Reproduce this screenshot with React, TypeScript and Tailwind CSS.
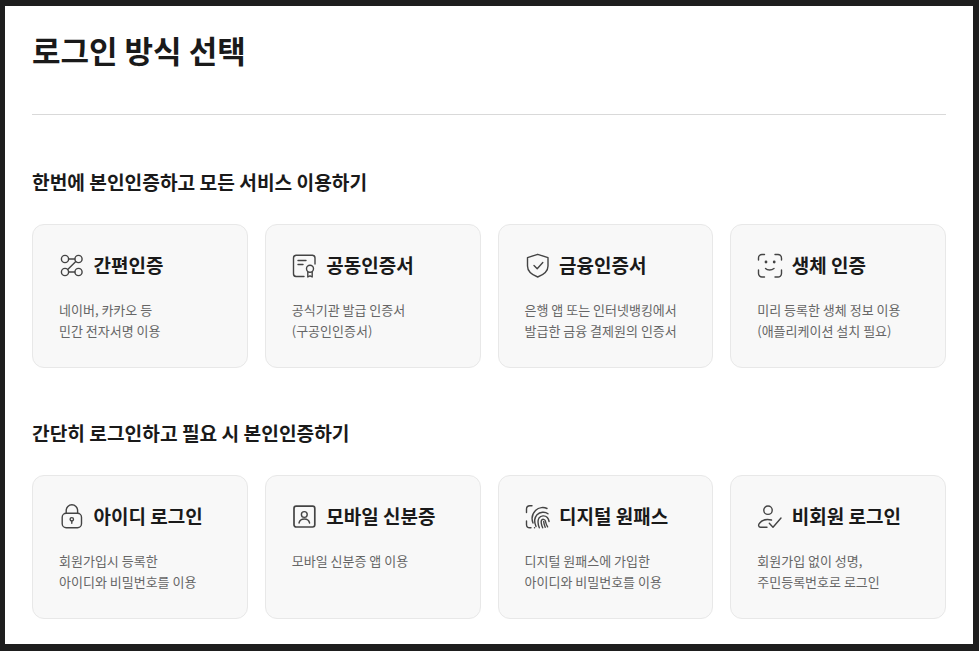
import React from "react";

const S = { fill: "none", stroke: "#444", strokeWidth: 1.4, strokeLinecap: "round" as const, strokeLinejoin: "round" as const };

const Svg = ({ children }: { children: React.ReactNode }) => (
  <svg width="26" height="26" viewBox="0 0 26 26" className="shrink-0" {...S}>{children}</svg>
);

const icons: Record<string, React.ReactNode> = {
  simple: (
    <Svg>
      <circle cx="6" cy="7" r="3.6" /><circle cx="19.5" cy="7" r="3.6" />
      <circle cx="6" cy="20" r="3.6" /><circle cx="19.5" cy="20" r="3.6" />
      <path d="M9.6 7h6.300M9.600 20h6.300M16.800 9.500l-8.100 8" />
    </Svg>
  ),
  cert: (
    <Svg>
      <path d="M12 24.500H4A2.800 2.800 0 0 1 1.500 21.500V6A2.800 2.800 0 0 1 4 3.200h16.500A2.800 2.800 0 0 1 23 6V12" />
      <path d="M6 8.500h8M6 12.500h5" />
      <circle cx="18" cy="16.800" r="3.500" />
      <path d="M15.800 20v5l2.200-1.200 2.200 1.200v-5" />
    </Svg>
  ),
  shield: (
    <Svg>
      <path d="M12.700 2.300l10.300 3.400v8.300c0 5-4.500 8.800-10.300 11-5.800-2.200-10.200-6-10.200-11V5.700z" />
      <path d="M9 13.500l3.200 3.200 5.600-6.200" />
    </Svg>
  ),
  face: (
    <Svg>
      <path d="M1.500 8V6A3.500 3.500 0 0 1 5 2.500h2.500M18 2.500h2.500A3.500 3.500 0 0 1 24.500 6v2M1.500 18v3.500A3.500 3.500 0 0 0 5 25h2.500M18 25h2.500a3.500 3.500 0 0 0 4-3.500V18" />
      <path d="M8.500 16.500c2 2 6 2 8.500 0" />
      <circle cx="9" cy="10" r=".7" fill="#444" /><circle cx="17.200" cy="10" r=".7" fill="#444" />
    </Svg>
  ),
  lock: (
    <Svg>
      <rect x="3.200" y="10.300" width="19.300" height="14.500" rx="4" />
      <path d="M7.200 10.300V7.500a5.700 5.700 0 0 1 11.400 0v2.800" />
      <circle cx="12.800" cy="16.300" r="1.700" />
      <path d="M12.800 18v2.300" />
    </Svg>
  ),
  mobile: (
    <Svg>
      <rect x="2" y="3.200" width="20.800" height="20.800" rx="2.200" strokeWidth="1.700" />
      <circle cx="12.300" cy="11.500" r="2.900" />
      <path d="M7 20c.6-2.800 2.500-4 5.300-4s4.700 1.200 5.300 4" />
    </Svg>
  ),
  finger: (
    <Svg>
      <path d="M1.500 9.500V6A3.300 3.300 0 0 1 4.800 2.800H7M1.500 18v3.500A3.300 3.300 0 0 0 4.800 24.800H6M9.500 24.800h.1" />
      <path d="M8 20c-1.700-4.500-1-9 2.500-12.500C14 4 19 4 22 5.500" />
      <path d="M11 23.500c-1.700-4-2-8.500 1-11.700 3-3 8-3.500 11-1" />
      <path d="M14.300 24.800c-1.300-3.300-2-6.800-.3-9.800 1.800-2.500 6-3 8.300-.5 1.200 1.300 1.500 2.600 1.800 4" />
      <path d="M17.700 24.800c-1-2.300-2-5-1.300-7.300.7-1.800 3.500-1.500 4 .5.400 2.300 1 4 2.200 5.800" />
      <path d="M18.700 18.500c.1 1.800.6 3.600 1.500 5.800" />
    </Svg>
  ),
  guest: (
    <Svg>
      <circle cx="11" cy="7.200" r="4.200" />
      <path d="M10 24.300H3.500c-2 0-2.500-2.300-1-4 2.500-3.200 7.500-4.400 12-3.300" />
      <path d="M12.300 20.300l3.700 4 8-9.300" />
    </Svg>
  ),
};

const Card = ({ icon, title, lines }: { icon: string; title: string; lines: string[] }) => (
  <div className="h-[144px] rounded-[12px] border border-[#e8e8e8] bg-[#f8f8f8] pl-[26px] pr-2 pt-[26px]">
    <div className="flex h-[28px] items-center gap-[8.5px]">
      {icons[icon]}
      <h3 className="text-[19px] font-bold leading-[28px] text-[#1a1a1a]">{title}</h3>
    </div>
    <div className="mt-[20px] text-[13px] leading-[21px] text-[#666]">
      {lines.map((l) => <p key={l}>{l}</p>)}
    </div>
  </div>
);

const Section = ({ title, cards }: { title: string; cards: { icon: string; title: string; lines: string[] }[] }) => (
  <section>
    <h2 className="text-[19.2px] font-bold leading-[28px] text-[#1a1a1a]">{title}</h2>
    <div className="mt-[28px] grid grid-cols-4 gap-[17px]">
      {cards.map((c) => <Card key={c.title} {...c} />)}
    </div>
  </section>
);

export default function App() {
  return (
    <div
      className="h-[651px] w-[979px] overflow-hidden bg-[#1e1e1e] pb-[7px] pl-[5px] pr-[6px] pt-[6px]"
      style={{ fontFamily: '"Noto Sans CJK KR", "Noto Sans", sans-serif' }}
    >
      <main className="h-full overflow-hidden bg-white pl-[27px] pr-[27px] pt-[22px]">
        <h1 className="text-[31px] font-bold leading-[44px] text-[#1a1a1a]">로그인 방식 선택</h1>
        <hr className="mt-[42px] border-0 border-t border-[#d9d9d9]" />
        <div className="mt-[53px] flex flex-col gap-[51px]">
          <Section
            title="한번에 본인인증하고 모든 서비스 이용하기"
            cards={[
              { icon: "simple", title: "간편인증", lines: ["네이버, 카카오 등", "민간 전자서명 이용"] },
              { icon: "cert", title: "공동인증서", lines: ["공식기관 발급 인증서", "(구공인인증서)"] },
              { icon: "shield", title: "금융인증서", lines: ["은행 앱 또는 인터넷뱅킹에서", "발급한 금융 결제원의 인증서"] },
              { icon: "face", title: "생체 인증", lines: ["미리 등록한 생체 정보 이용", "(애플리케이션 설치 필요)"] },
            ]}
          />
          <Section
            title="간단히 로그인하고 필요 시 본인인증하기"
            cards={[
              { icon: "lock", title: "아이디 로그인", lines: ["회원가입시 등록한", "아이디와 비밀번호를 이용"] },
              { icon: "mobile", title: "모바일 신분증", lines: ["모바일 신분증 앱 이용"] },
              { icon: "finger", title: "디지털 원패스", lines: ["디지털 원패스에 가입한", "아이디와 비밀번호를 이용"] },
              { icon: "guest", title: "비회원 로그인", lines: ["회원가입 없이 성명,", "주민등록번호로 로그인"] },
            ]}
          />
        </div>
      </main>
    </div>
  );
}
